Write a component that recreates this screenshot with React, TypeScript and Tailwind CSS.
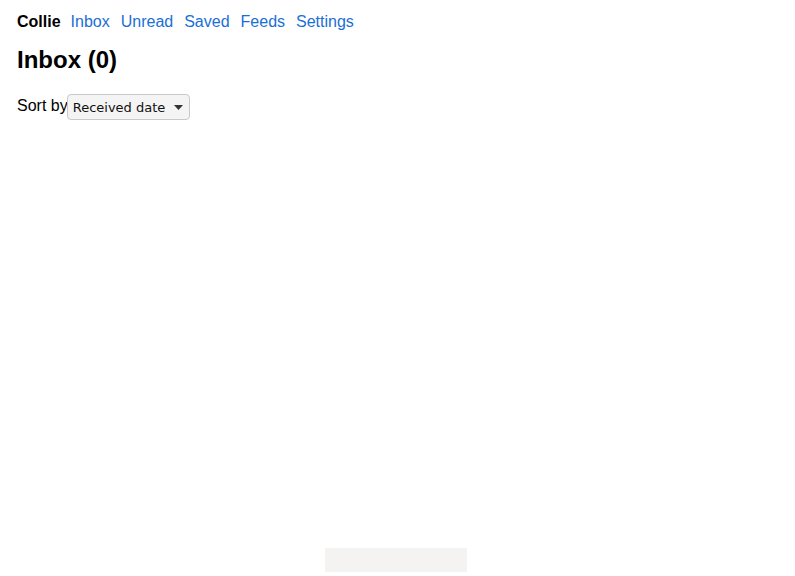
import { useState } from "react";

// Simple reader shell: nav, heading, sort control
export default function App() {
  const [sort, setSort] = useState("received");
  const links = ["Inbox", "Unread", "Saved", "Feeds", "Settings"];

  return (
    <div className="min-h-[576px] flex flex-col bg-white text-black font-['Liberation_Sans',Arial,sans-serif]">
      <div className="pl-[17px] pt-[11px]">
        {/* nav */}
        <nav className="flex items-center gap-[11px] text-base leading-[22px]">
          <span className="font-bold -mr-[1px]">Collie</span>
          {links.map((l) => (
            <a key={l} href="#" className="text-[#1a6fd6]">
              {l}
            </a>
          ))}
        </nav>

        <h1 className="mt-[13px] text-2xl font-bold leading-[28px]">Inbox (0)</h1>

        {/* sort control */}
        <div className="mt-[20px] flex items-center text-base">
          <span className="leading-[22px] -mt-[2px]">Sort by</span>
          <div className="relative -ml-[1px]">
            <select
              value={sort}
              onChange={(e) => setSort(e.target.value)}
              className="appearance-none h-[26px] w-[123px] pl-[5px] pr-[16px] pt-[2px] rounded-[4px] border border-[#c9c9c9] bg-[#f4f4f4] text-[13px] text-[#111] font-['DejaVu_Sans',sans-serif] outline-none"
            >
              <option value="received">Received date</option>
              <option value="published">Published date</option>
            </select>
            <svg
              className="pointer-events-none absolute right-[7px] top-[11px]"
              width="9"
              height="5"
              viewBox="0 0 9 5"
            >
              <path d="M0 0 L9 0 L4.5 5 Z" fill="#333" />
            </svg>
          </div>
        </div>
      </div>

      {/* bottom status strip */}
      <div className="mt-auto mb-1 ml-[325px] w-[142px] h-[24px] bg-[#f4f3f1]" />
    </div>
  );
}
